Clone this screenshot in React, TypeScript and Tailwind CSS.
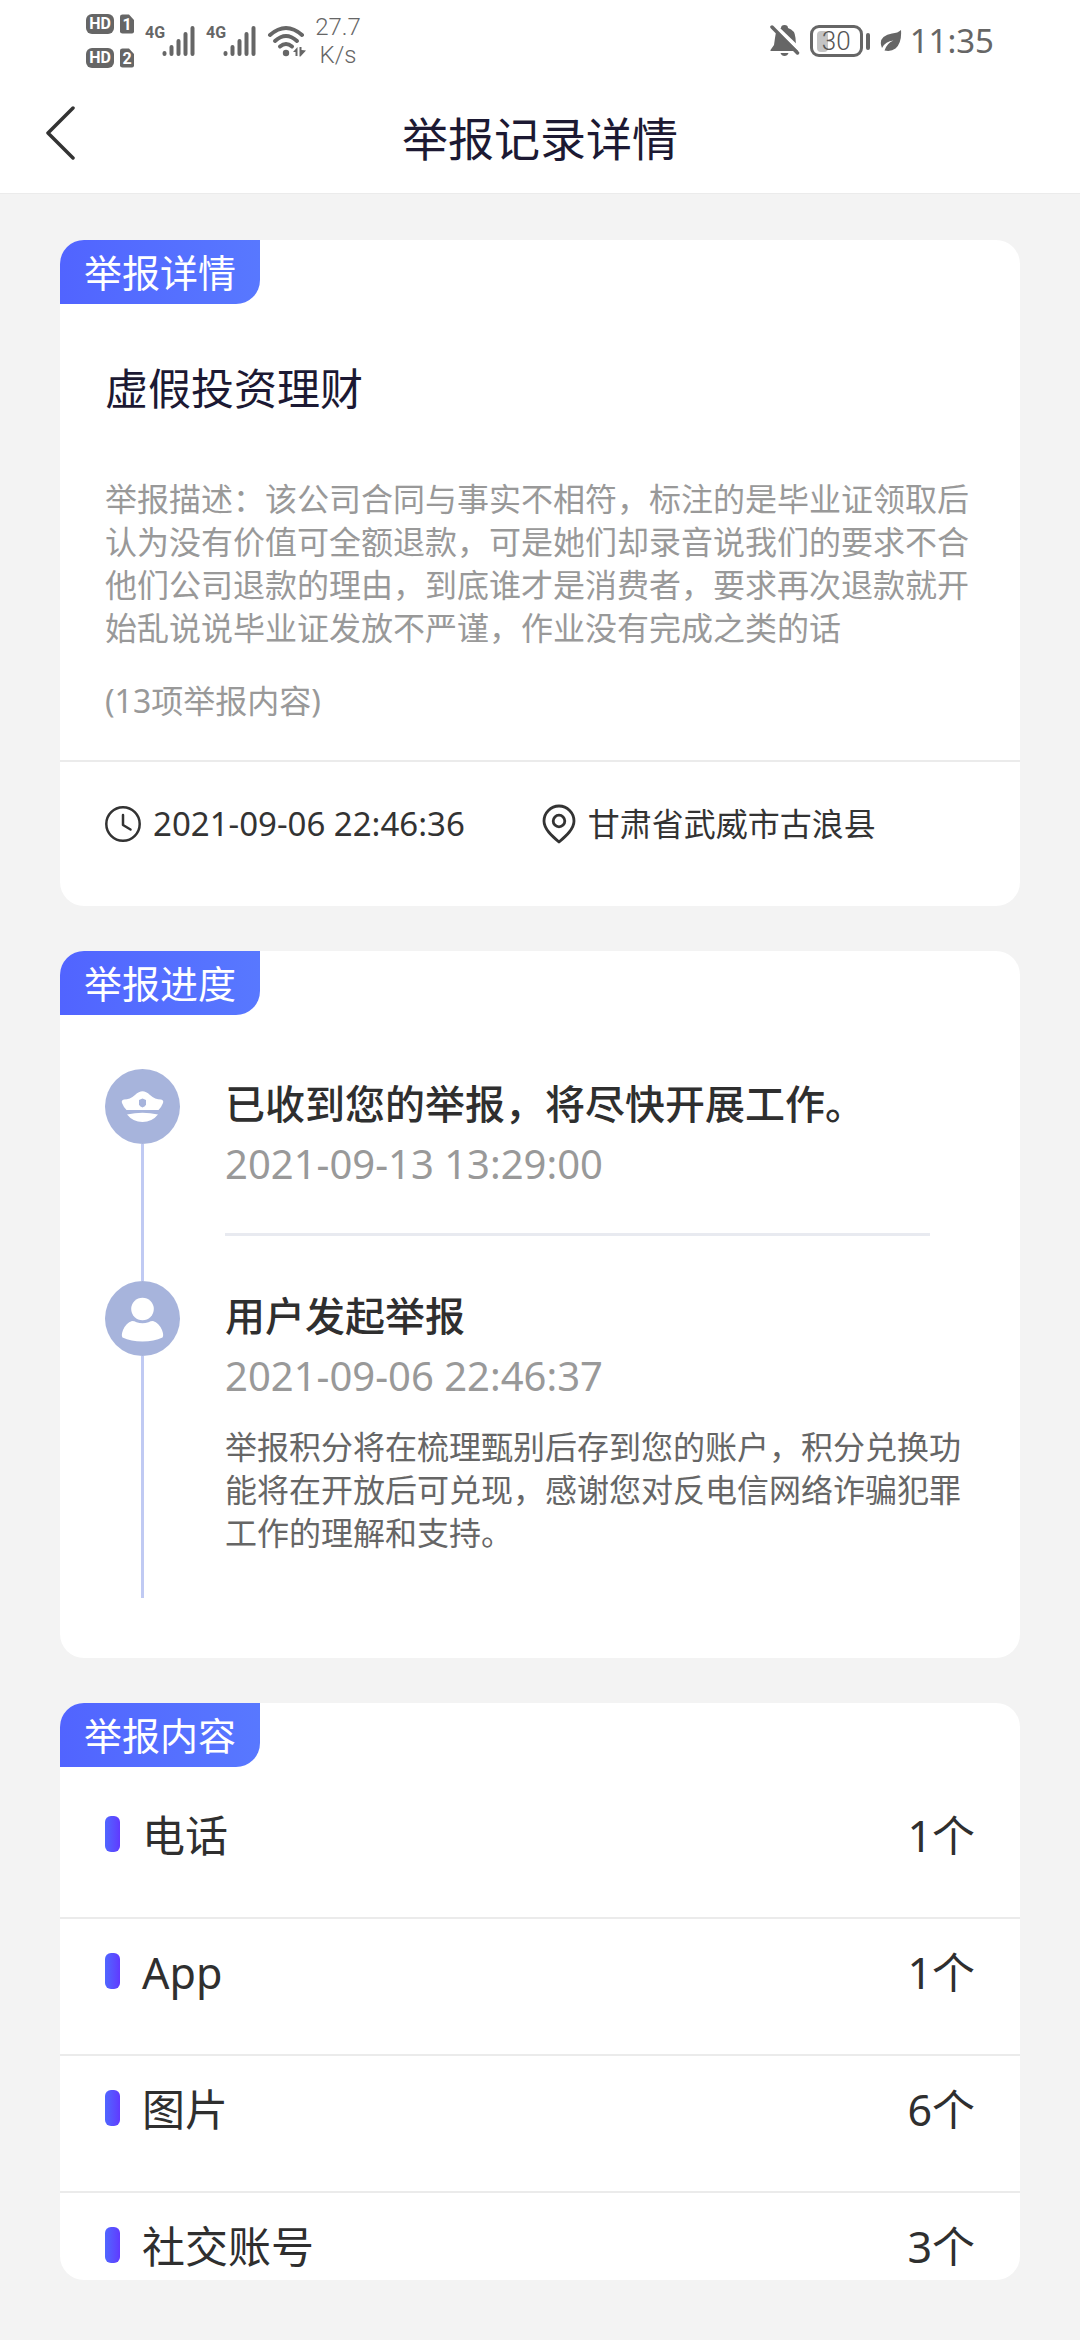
import type { ReactNode } from 'react'

type ReportItem = { label: string; count: number }

const reportItems: ReportItem[] = [
  { label: '电话', count: 1 },
  { label: 'App', count: 1 },
  { label: '图片', count: 6 },
  { label: '社交账号', count: 3 },
]

function SimBadge({ slot }: { slot: string }) {
  return (
    <div className="flex items-center gap-1.5">
      <span className="flex h-5 w-7 items-center justify-center rounded-md bg-[#666666] font-['Roboto',sans-serif] text-base font-bold leading-5 text-white">
        HD
      </span>
      <svg width="14" height="20" viewBox="0 0 14 20">
        <path d="M2.500 0.500H9L14 6V17.500Q14 19.500 12 19.500H2.500Q0 19.500 0 17.500V2.500Q0 0.500 2.500 0.500Z" fill="#666666" />
        <text x="7" y="16" textAnchor="middle" fontSize="16" fontWeight="700" fontFamily="Roboto, sans-serif" fill="#fff">
          {slot}
        </text>
      </svg>
    </div>
  )
}

function Signal() {
  return (
    <div className="flex h-8 items-start">
      <span className="font-['Roboto',sans-serif] text-base font-bold leading-4">4G</span>
      <svg className="-ml-[3px]" width="33" height="32" viewBox="0 0 33 32" stroke="currentColor" strokeWidth="4" strokeLinecap="round">
        <path d="M2.500 28V29M9.500 22V29M16.500 16V29M23.500 9V29M30.500 3V29" />
      </svg>
    </div>
  )
}

function WifiIcon() {
  return (
    <svg width="40" height="34" viewBox="0 0 40 34" fill="none" stroke="currentColor" strokeWidth="4" strokeLinecap="round">
      <path d="M3 11Q19 -3 35 11" />
      <path d="M8 17Q19 7 30 17" />
      <path d="M13 22.500Q19 17.500 25 22.500" />
      <circle cx="19" cy="29" r="3.200" fill="currentColor" stroke="none" />
      <path d="M26 28L30.500 23V32H28.500V28ZM32.500 23H34.500V26L39 26.500L33.500 32.500H32.500Z" fill="currentColor" stroke="none" />
    </svg>
  )
}

function MutedBellIcon() {
  return (
    <svg width="30" height="34" viewBox="0 0 30 34">
      <path d="M11 4Q11 1 14.500 1T18 4Q25 6 25.500 14L26 22L29 26V27H0.500V26L4 21L5 14Q5.500 6 11 4Z" fill="currentColor" />
      <path d="M10.500 29H18.500Q17.500 32 14.500 32T10.500 29Z" fill="currentColor" />
      <path d="M3 0L30 26" stroke="#fff" strokeWidth="4" />
      <path d="M2 3L27.500 29" stroke="currentColor" strokeWidth="3.500" strokeLinecap="round" />
    </svg>
  )
}

function LeafIcon() {
  return (
    <svg width="22" height="24" viewBox="0 0 22 24">
      <path d="M21 1Q22 14 15.500 19.500Q11 23 4.500 21.500Q7 14 13.500 11.500Q5.500 12 2 19Q-1 12 3.500 8Q7 5 12 4.500Q18 4 21 1Z" fill="currentColor" />
    </svg>
  )
}

function StatusBar() {
  return (
    <div className="flex h-[82px] items-center justify-between pl-[86px] pr-[86px] text-[#666666]">
      <div className="flex items-center">
        <div className="flex flex-col gap-3.5">
          <SimBadge slot="1" />
          <SimBadge slot="2" />
        </div>
        <div className="ml-[11px] flex items-center gap-[11px]">
          <Signal />
          <Signal />
          <WifiIcon />
        </div>
        <div className="ml-2 text-center font-['Roboto',sans-serif] text-2xl font-light leading-7">
          27.7
          <br />
          K/s
        </div>
      </div>
      <div className="flex items-center">
        <MutedBellIcon />
        <div className="ml-2.5 flex h-8 w-[53px] items-center rounded-[9px] border-3 border-[#666666] px-1">
          <div className="relative flex h-[21px] w-full items-center justify-center">
            <span className="absolute left-0 h-full w-[30%] rounded-sm bg-[#c4c4c4]" />
            <span className="relative font-['Roboto',sans-serif] text-[26px] font-light leading-none text-[#555555]">30</span>
          </div>
        </div>
        <span className="ml-[3px] h-[17px] w-1 rounded-sm bg-[#666666]" />
        <div className="ml-2.5">
          <LeafIcon />
        </div>
        <time className="ml-2 font-['Noto_Sans',sans-serif] text-[33px] leading-10">11:35</time>
      </div>
    </div>
  )
}

function Header() {
  return (
    <header className="border-b border-[#ebebeb] bg-white">
      <StatusBar />
      <div className="grid h-[111px] grid-cols-[1fr_auto_1fr] items-center px-[45px]">
        <button type="button" aria-label="返回" className="mb-2.5 w-8">
          <svg width="32" height="54" viewBox="0 0 32 54" fill="none" stroke="#333" strokeWidth="3.500" strokeLinecap="round" strokeLinejoin="round">
            <path d="M28 2L3 27L28 52" />
          </svg>
        </button>
        <h1 className="text-[46px] leading-[60px] text-[#1c1933]">举报记录详情</h1>
      </div>
    </header>
  )
}

function Card({ title, children }: { title: string; children: ReactNode }) {
  return (
    <section className="overflow-hidden rounded-3xl bg-white">
      <h2 className="flex h-16 w-[200px] items-center justify-center rounded-br-3xl bg-linear-to-r from-[#5164ff] to-[#5878ff] text-[38px] leading-[60px] text-white">
        {title}
      </h2>
      {children}
    </section>
  )
}

function ClockIcon() {
  return (
    <svg width="36" height="36" viewBox="0 0 36 36" fill="none" stroke="currentColor" strokeWidth="2.500" strokeLinecap="round" strokeLinejoin="round">
      <circle cx="18" cy="18" r="16.700" />
      <path d="M18 9V19L25.500 23.500" />
    </svg>
  )
}

function PinIcon() {
  return (
    <svg width="34" height="40" viewBox="0 0 34 40" fill="none" stroke="currentColor" strokeWidth="2.800" strokeLinejoin="round">
      <path d="M17 38C10 32 2 25 2 17A15 15 0 0 1 32 17C32 25 24 32 17 38Z" />
      <circle cx="17" cy="17" r="5.800" />
    </svg>
  )
}

function OfficerIcon() {
  return (
    <svg width="75" height="75" viewBox="0 0 75 75">
      <circle cx="37.500" cy="37.500" r="37.500" fill="#a7b4dc" />
      <path d="M19 30.500Q25 30.500 30 26Q34 22.300 37.500 22.300T45 26Q50 30.500 56 30.500Q59 31 58 34Q56.500 38 53.500 41H21.500Q18.500 38 17 34Q16 31 19 30.500Z" fill="#fff" />
      <path d="M34 31L37.500 29.500L41 31V35.500Q40.500 37.500 37.500 38.500Q34.500 37.500 34 35.500Z" fill="#a7b4dc" />
      <path d="M22 45.500Q30 43.800 37.500 43.800T53 45.500Q47 53 37.500 53T22 45.500Z" fill="#fff" />
    </svg>
  )
}

function UserIcon() {
  return (
    <svg width="75" height="75" viewBox="0 0 75 75">
      <circle cx="37.500" cy="37.500" r="37.500" fill="#a7b4dc" />
      <circle cx="37.500" cy="28" r="11.300" fill="#fff" />
      <path d="M27 40Q29.500 40 31.500 41.200Q37.500 43.500 43.500 41.200Q45.500 40 48 40Q54 42 57 49Q59 54.500 57.500 56.500Q49 60.500 37.500 60.500T17.500 56.500Q16 54.500 18 49Q21 42 27 40Z" fill="#fff" />
    </svg>
  )
}

function TimelineItem({ icon, title, time, children }: { icon: ReactNode; title: string; time: string; children: ReactNode }) {
  return (
    <li className="flex gap-[45px]">
      <div className="flex shrink-0 flex-col items-center">
        {icon}
        <span className="w-[3px] flex-1 bg-[#c0caf3]" />
      </div>
      <div className="flex-1 pt-[5px]">
        <h3 className="text-[40px] font-medium leading-[60px] text-[#2f2f2f]">{title}</h3>
        <time className="block text-[40px] leading-[60px] text-[#999999]">{time}</time>
        {children}
      </div>
    </li>
  )
}

export default function App() {
  return (
    <div className="min-h-screen bg-[#f3f3f3] font-['Noto_Sans','Noto_Sans_CJK_SC',sans-serif]" lang="zh-CN">
      <Header />

      <main className="flex flex-col gap-[45px] px-[60px] pb-[60px] pt-[46px]">
        {/* Report details */}
        <Card title="举报详情">
          <div className="px-[45px] pb-[38px] pt-[55px]">
            <h3 className="text-[43px] leading-[60px] text-[#1c1933]">虚假投资理财</h3>
            <p className="mt-[58px] text-[32px] leading-[43px] text-[#999999]">
              举报描述：该公司合同与事实不相符，标注的是毕业证领取后认为没有价值可全额退款，可是她们却录音说我们的要求不合他们公司退款的理由，到底谁才是消费者，要求再次退款就开始乱说说毕业证发放不严谨，作业没有完成之类的话
            </p>
            <p className="mt-[30px] text-[32px] leading-[43px] text-[#999999]">(13项举报内容)</p>
          </div>
          <div className="flex items-center gap-[77px] border-t-2 border-[#ebebeb] px-[45px] pb-[60px] pt-10 text-[32px] leading-[44px] text-[#333333]">
            <div className="flex items-center gap-3">
              <ClockIcon />
              <time className="text-[33px]">2021-09-06 22:46:36</time>
            </div>
            <div className="flex items-center gap-3">
              <PinIcon />
              <span>甘肃省武威市古浪县</span>
            </div>
          </div>
        </Card>

        {/* Report progress */}
        <Card title="举报进度">
          <ol className="px-[45px] pb-[60px] pt-[54px]">
            <TimelineItem icon={<OfficerIcon />} title="已收到您的举报，将尽快开展工作。" time="2021-09-13 13:29:00">
              <hr className="mb-[45px] mr-[45px] mt-[39px] border-t-3 border-[#e8eaf0]" />
            </TimelineItem>
            <TimelineItem icon={<UserIcon />} title="用户发起举报" time="2021-09-06 22:46:37">
              <p className="pb-11 pt-[19px] text-[32px] leading-[43px] text-[#666666]">
                举报积分将在梳理甄别后存到您的账户，积分兑换功能将在开放后可兑现，感谢您对反电信网络诈骗犯罪工作的理解和支持。
              </p>
            </TimelineItem>
          </ol>
        </Card>

        {/* Reported content */}
        <Card title="举报内容">
          <ul className="mt-[15px] text-[43px] leading-[60px] text-[#2f2f2f]">
            {reportItems.map((item) => (
              <li
                key={item.label}
                className="flex items-start border-b-2 border-[#ebebeb] px-[45px] pb-[51px] pt-6 last:border-b-0 last:pb-[3px]"
              >
                <span className="mt-2.5 h-9 w-[15px] rounded-md bg-linear-to-r from-[#4f66ff] to-[#6038ff]" />
                <span className="ml-[22px] flex-1">{item.label}</span>
                <span>{item.count}个</span>
              </li>
            ))}
          </ul>
        </Card>
      </main>
    </div>
  )
}
